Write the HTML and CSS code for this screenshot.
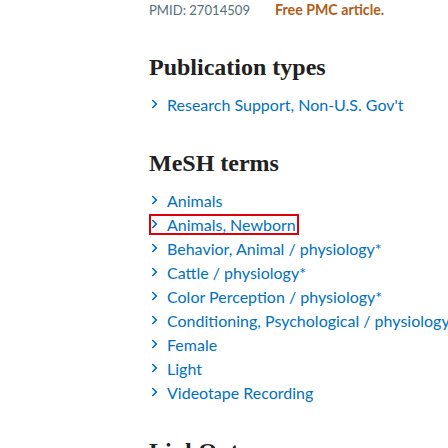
FILE: index.html
```html
<!DOCTYPE html>
<html lang="en">
<head>
<meta charset="utf-8">
<title>Article details</title>
<link rel="stylesheet" href="styles.css">
</head>
<body>
<div class="page">
  <aside class="sidebar"></aside>
  <main class="content">
    <div class="identifiers">
      <span class="pmid">PMID: 27014509</span>
      <span class="free">Free PMC article.</span>
    </div>

    <section class="section">
      <h2 class="heading">Publication types</h2>
      <ul class="term-list">
        <li class="term"><a class="term-btn" href="#"><svg class="chev" viewBox="0 0 7 10"><path d="M1.3 1 L5.3 5 L1.3 9"/></svg><span>Research Support, Non-U.S. Gov't</span></a></li>
      </ul>
    </section>

    <section class="section">
      <h2 class="heading">MeSH terms</h2>
      <ul class="term-list">
        <li class="term"><a class="term-btn" href="#"><svg class="chev" viewBox="0 0 7 10"><path d="M1.3 1 L5.3 5 L1.3 9"/></svg><span>Animals</span></a></li>
        <li class="term"><a class="term-btn term-focused" href="#"><svg class="chev" viewBox="0 0 7 10"><path d="M1.3 1 L5.3 5 L1.3 9"/></svg><span>Animals, Newborn</span></a></li>
        <li class="term"><a class="term-btn" href="#"><svg class="chev" viewBox="0 0 7 10"><path d="M1.3 1 L5.3 5 L1.3 9"/></svg><span>Behavior, Animal / physiology*</span></a></li>
        <li class="term"><a class="term-btn" href="#"><svg class="chev" viewBox="0 0 7 10"><path d="M1.3 1 L5.3 5 L1.3 9"/></svg><span>Cattle / physiology*</span></a></li>
        <li class="term"><a class="term-btn" href="#"><svg class="chev" viewBox="0 0 7 10"><path d="M1.3 1 L5.3 5 L1.3 9"/></svg><span>Color Perception / physiology*</span></a></li>
        <li class="term"><a class="term-btn" href="#"><svg class="chev" viewBox="0 0 7 10"><path d="M1.3 1 L5.3 5 L1.3 9"/></svg><span>Conditioning, Psychological / physiology*</span></a></li>
        <li class="term"><a class="term-btn" href="#"><svg class="chev" viewBox="0 0 7 10"><path d="M1.3 1 L5.3 5 L1.3 9"/></svg><span>Female</span></a></li>
        <li class="term"><a class="term-btn" href="#"><svg class="chev" viewBox="0 0 7 10"><path d="M1.3 1 L5.3 5 L1.3 9"/></svg><span>Light</span></a></li>
        <li class="term"><a class="term-btn" href="#"><svg class="chev" viewBox="0 0 7 10"><path d="M1.3 1 L5.3 5 L1.3 9"/></svg><span>Videotape Recording</span></a></li>
      </ul>
    </section>

    <section class="section">
      <h2 class="heading">LinkOut - more resources</h2>
    </section>
  </main>
</div>
</body>
</html>
```

FILE: styles.css
```css
html, body {
  margin: 0;
  padding: 0;
  overflow: hidden;
  background: #ffffff;
}

.page {
  display: grid;
  grid-template-columns: 149px 1fr;
  font-family: Lato, "Open Sans", sans-serif;
  font-size: 16px;
}

.content {
  min-width: 0;
  white-space: nowrap;
}

.identifiers {
  display: flex;
  align-items: baseline;
  gap: 25px;
  height: 21px;
  line-height: 20px;
}

.pmid {
  color: #52707a;
  font-size: 13.1px;
}

.free {
  color: #b35c17;
  font-weight: 700;
  font-size: 14.2px;
}

.section {
  margin-top: 31px;
}

.heading {
  margin: 0 0 11px 0;
  font-family: "Liberation Serif", serif;
  font-weight: 700;
  font-size: 24px;
  line-height: 30px;
  color: #212121;
}

.term-list {
  list-style: none;
  margin: 0;
  padding: 0;
}

.term {
  display: flex;
  align-items: flex-start;
  height: 24px;
}

.term-btn {
  display: flex;
  align-items: flex-start;
  height: 21px;
  box-sizing: border-box;
  margin-top: 1px;
  border: 2px solid transparent;
  padding-right: 1px;
  line-height: 17px;
  color: #0071bc;
  text-decoration: none;
}

.term-focused {
  border-color: #e0000b;
}

.chev {
  width: 7px;
  height: 10px;
  margin-top: 3px;
  margin-right: 9px;
  flex: none;
}

.chev path {
  fill: none;
  stroke: #0071bc;
  stroke-width: 1.7;
}
```
